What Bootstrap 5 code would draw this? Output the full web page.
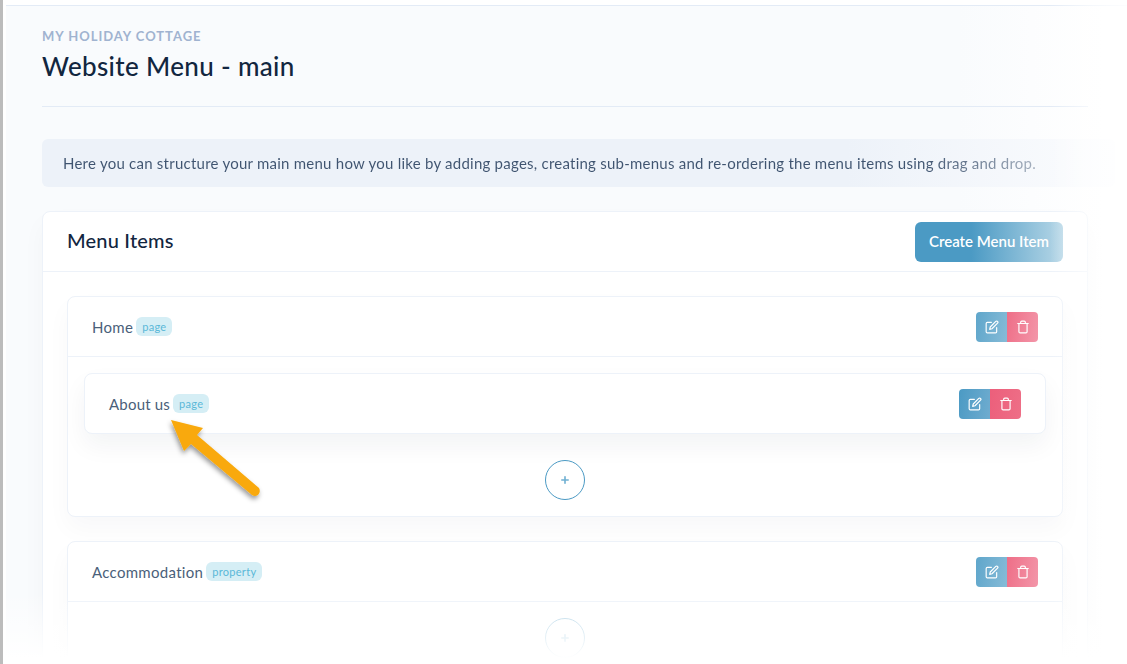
<!DOCTYPE html>
<html lang="en"><head><meta charset="utf-8"><title>Website Menu</title>
<link href="https://cdn.jsdelivr.net/npm/bootstrap@5.3.0/dist/css/bootstrap.min.css" rel="stylesheet">
<style>
html,body{height:664px;overflow:hidden;background:#fff}
body{font-family:"Lato","Liberation Sans",sans-serif;font-size:15px;color:#12263f}
.shot{position:relative;height:664px;overflow:hidden;border-left:3px solid #bcbcbc;padding-left:3px}
.stage{height:664px;padding-top:5px;background:linear-gradient(90deg,#f9fbfd 0,#f9fbfd 85%,#fff 98%)}
.topline{border-top:1px solid #e3ebf6;padding:0 39px 0 36px}
.headblock{height:101px;padding-top:22px;border-bottom:1px solid #e3ebf6}
.pretitle{font-size:13px;line-height:16px;letter-spacing:.97px;font-weight:700;color:#a0b3d0;text-transform:uppercase}
.pagetitle{font-size:26px;line-height:32px;font-weight:500;margin:6px 0 0;color:#12263f;letter-spacing:.35px}
.infobox{height:48px;margin-top:32px;margin-right:-27px;padding:0 21px;background:linear-gradient(90deg,#edf2f9 0,#edf2f9 75%,#fbfcfe 100%);border-radius:6px;display:flex;align-items:center;letter-spacing:.24px}
.infotext{background:linear-gradient(90deg,#3f5470 0,#3f5470 88%,#a4afbe 100%);-webkit-background-clip:text;background-clip:text;color:transparent}
.panel{margin-top:24px;background:#fff;border:1px solid #edf2f9;border-radius:8px;box-shadow:0 12px 24px rgba(18,38,63,.03)}
.panelhead{height:60px;padding:0 24px;border-bottom:1px solid #edf2f9}
.paneltitle{font-size:20px;line-height:24px;font-weight:500;letter-spacing:.2px;padding-bottom:3px}
.createbtn{width:148px;height:40px;border:0;border-radius:6px;color:#fff;font-size:15px;font-weight:600;background:linear-gradient(90deg,#4b9ac4 38%,#b7d7e7 100%)}
.panelbody{padding:24px 24px 0}
.menuitem{background:#fff;border:1px solid #edf2f9;border-radius:8px;box-shadow:0 12px 24px rgba(18,38,63,.03);margin-bottom:24px}
.itemhead{height:60px;padding:0 24px;color:#4a5f7a;letter-spacing:.3px}
.withline{border-bottom:1px solid #edf2f9}
.lbl{padding-top:2px}
.kind{font-size:11px;line-height:19px;padding:0 6px;border-radius:6px;background:#d5eef5;color:#5ab8d8;margin-left:3px;letter-spacing:.3px}
.actions{display:flex;height:30px;border-radius:4px;overflow:hidden}
.actions span{width:31px;display:flex;align-items:center;justify-content:center}
.actions svg{width:14px;height:14px;fill:none;stroke:#fff;stroke-width:2;stroke-linecap:round;stroke-linejoin:round}
.ed{background:linear-gradient(100deg,#4b9ac4,#6faccf)}
.de{background:linear-gradient(100deg,#ec5f7b,#ee6f87)}
.soft .ed{background:linear-gradient(100deg,#5fa6cb,#86bbd7)}
.soft .de{background:linear-gradient(100deg,#ee6e87,#f396a9)}
.childzone{padding:16px 16px 16px}
.childitem{height:61px;padding:0 24px;background:#fff;border:1px solid #edf2f9;border-radius:8px;box-shadow:0 12px 24px rgba(18,38,63,.05);color:#4a5f7a;letter-spacing:.2px}
.addrow{display:flex;justify-content:center;padding-top:26px}
.addrow-second{padding-top:16px}
.addbtn{width:40px;height:40px;border:1px solid #4b9ac4;border-radius:50%;color:#6fb0d2;display:flex;align-items:center;justify-content:center}
.addbtn svg{width:8px;height:8px;stroke:currentColor;stroke-width:2;stroke-linecap:round}
.addfaint{opacity:.45}
.pointer{position:absolute;left:150px;top:400px;width:130px;height:115px;overflow:visible}
.fade-b{position:absolute;left:-3px;right:0;bottom:0;height:72px;background:linear-gradient(180deg,rgba(255,255,255,0),#fff 92%);pointer-events:none}
.fade-r{position:absolute;top:0;right:0;bottom:0;width:77px;background:linear-gradient(90deg,rgba(255,255,255,0),rgba(255,255,255,.6) 50%,rgba(255,255,255,.9) 100%);pointer-events:none}
.topwhite{height:5px;background:#fff;margin:-5px 0 0}
</style></head><body>
<div class="shot">
 <div class="stage">
  <div class="topwhite"></div>
  <div class="topline">
   <div class="headblock">
    <div class="pretitle">My Holiday Cottage</div>
    <h1 class="pagetitle">Website Menu - main</h1>
   </div>
   <div class="infobox"><span class="infotext">Here you can structure your main menu how you like by adding pages, creating sub-menus and re-ordering the menu items using drag and drop.</span></div>
   <div class="panel">
    <div class="panelhead d-flex align-items-center justify-content-between">
     <div class="paneltitle">Menu Items</div>
     <button class="createbtn" type="button">Create Menu Item</button>
    </div>
    <div class="panelbody">
     <div class="menuitem">
      <div class="itemhead withline d-flex align-items-center justify-content-between soft">
       <div class="d-flex align-items-center"><span class="lbl">Home</span><span class="kind">page</span></div>
       <div class="actions"><span class="ed"><svg viewBox="0 0 24 24"><path d="M11 4H4a2 2 0 0 0-2 2v14a2 2 0 0 0 2 2h14a2 2 0 0 0 2-2v-7"/><path d="M18.5 2.5a2.121 2.121 0 0 1 3 3L12 15l-4 1 1-4 9.5-9.5z"/></svg></span><span class="de"><svg viewBox="0 0 24 24"><path d="M3 6h18"/><path d="M19 6v14a2 2 0 0 1-2 2H7a2 2 0 0 1-2-2V6m3 0V4a2 2 0 0 1 2-2h4a2 2 0 0 1 2 2v2"/></svg></span></div>
      </div>
      <div class="childzone">
       <div class="childitem d-flex align-items-center justify-content-between">
        <div class="d-flex align-items-center"><span class="lbl">About us</span><span class="kind">page</span></div>
        <div class="actions"><span class="ed"><svg viewBox="0 0 24 24"><path d="M11 4H4a2 2 0 0 0-2 2v14a2 2 0 0 0 2 2h14a2 2 0 0 0 2-2v-7"/><path d="M18.5 2.5a2.121 2.121 0 0 1 3 3L12 15l-4 1 1-4 9.5-9.5z"/></svg></span><span class="de"><svg viewBox="0 0 24 24"><path d="M3 6h18"/><path d="M19 6v14a2 2 0 0 1-2 2H7a2 2 0 0 1-2-2V6m3 0V4a2 2 0 0 1 2-2h4a2 2 0 0 1 2 2v2"/></svg></span></div>
       </div>
       <div class="addrow"><div class="addbtn"><svg viewBox="0 0 10 10"><path d="M5 1v8M1 5h8"/></svg></div></div>
      </div>
     </div>
     <div class="menuitem">
      <div class="itemhead withline d-flex align-items-center justify-content-between soft">
       <div class="d-flex align-items-center"><span class="lbl">Accommodation</span><span class="kind">property</span></div>
       <div class="actions"><span class="ed"><svg viewBox="0 0 24 24"><path d="M11 4H4a2 2 0 0 0-2 2v14a2 2 0 0 0 2 2h14a2 2 0 0 0 2-2v-7"/><path d="M18.5 2.5a2.121 2.121 0 0 1 3 3L12 15l-4 1 1-4 9.5-9.5z"/></svg></span><span class="de"><svg viewBox="0 0 24 24"><path d="M3 6h18"/><path d="M19 6v14a2 2 0 0 1-2 2H7a2 2 0 0 1-2-2V6m3 0V4a2 2 0 0 1 2-2h4a2 2 0 0 1 2 2v2"/></svg></span></div>
      </div>
      <div class="addrow addrow-second pb-4"><div class="addbtn addfaint"><svg viewBox="0 0 10 10"><path d="M5 1v8M1 5h8"/></svg></div></div>
     </div>
    </div>
   </div>
  </div>
 </div>
 <div class="fade-r"></div>
 <div class="fade-b"></div>
 <svg class="pointer" viewBox="0 0 130 115" aria-hidden="true"><defs><filter id="ds" x="-20%" y="-20%" width="150%" height="150%"><feDropShadow dx="-1" dy="3" stdDeviation="2.5" flood-color="#000" flood-opacity=".4"/></filter></defs><g filter="url(#ds)"><path d="M18 20 L50 28 L44 35 L106 88 Q108 92 105 95 Q102 97 99 95 L38 44 L31 51 Z" fill="#f9a90a"/></g></svg>
</div>
</body></html>
